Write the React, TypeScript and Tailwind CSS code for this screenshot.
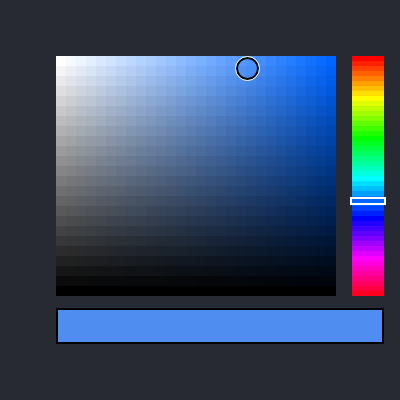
import React from "react";

const COLS = 28;
const ROWS = 24;
const STRIPES = 48;
const HUE = 216;

function hsv(h: number, s: number, v: number) {
  const f = (n: number) => {
    const k = (n + h / 60) % 6;
    return Math.round(255 * (v - v * s * Math.max(0, Math.min(k, 4 - k, 1))));
  };
  return `rgb(${f(5)},${f(3)},${f(1)})`;
}

export default function App() {
  const cells = [];
  for (let r = 0; r < ROWS; r++) {
    for (let c = 0; c < COLS; c++) {
      cells.push(<div key={`${r}-${c}`} style={{ background: hsv(HUE, c / (COLS - 1), 1 - r / (ROWS - 1)) }} />);
    }
  }

  return <div className="flex h-[400px] w-[400px] flex-col bg-[#282a33] pl-[56px] pt-[56px]">
    <div className="flex gap-4">
      <div className="relative h-[240px] w-[280px]">
        <div className="grid h-full w-full grid-cols-[repeat(28,10px)] grid-rows-[repeat(24,10px)]">{cells}</div>
        <div className="absolute left-[180px] top-[1px] size-[23px] rounded-full border-2 border-black outline outline-1 outline-white" />
      </div>
      <div className="relative h-[240px] w-[32px]">
        <div className="flex h-full flex-col">
          {Array.from({ length: STRIPES }, (_, i) => <div key={i} className="h-[5px]" style={{ background: hsv((i * 360) / STRIPES, 1, 1) }} />)}
        </div>
        <div className="absolute left-[-2px] top-[141px] h-[8px] w-[36px] border-2 border-white bg-[#0066ff]" />
      </div>
    </div>
    <div className="mt-3 h-[36px] w-[328px] border-2 border-black bg-[#4f8df1]" />
  </div>;
}
